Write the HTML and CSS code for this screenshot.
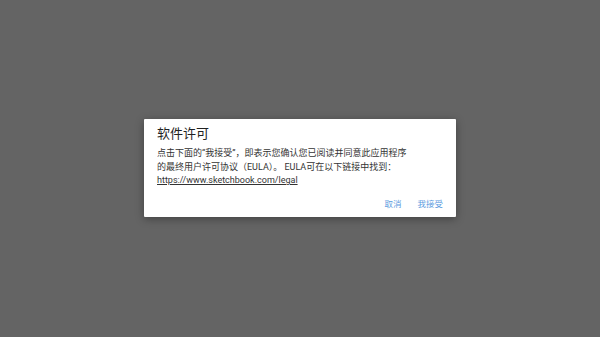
FILE: index.html
```html
<!DOCTYPE html>
<html>
<head>
<meta charset="UTF-8">
<title>软件许可</title>
<link rel="stylesheet" href="styles.css">
</head>
<body>
	<div class="dialog">
		<div class="title">软件许可</div>
		<div class="message">
			点击下面的“我接受”，即表示您确认您已阅读并同意此应用程序<br/>
			的最终用户许可协议（EULA）。 EULA可在以下链接中找到：<br/>
			<a href="#">https://www.sketchbook.com/legal</a>
		</div>
		<div class="actions">
			<span class="btn">取消</span>
			<span class="btn">我接受</span>
		</div>
	</div>
</body>
</html>
```

FILE: styles.css
```css
html, body{
	margin: 0;
	height: 100%;
}
body{
	background: #646464;
	display: flex;
	align-items: center;
	justify-content: center;
	font-family: Roboto, "Noto Sans CJK SC", sans-serif;
}
.dialog{
	width: 312px;
	height: 98px;
	box-sizing: border-box;
	background: #fff;
	border-radius: 1px;
	box-shadow: 0 2px 8px rgba(0,0,0,.35);
	padding: 6px 13px 0;
	margin-bottom: 1px;
}
.title{
	font-size: 13px;
	line-height: 18px;
	color: #212121;
	margin-bottom: 4px;
}
.message{
	font-size: 9px;
	line-height: 13.5px;
	color: #333;
	white-space: nowrap;
}
.message a{
	color: #333;
	text-decoration: underline;
}
.actions{
	display: flex;
	justify-content: flex-end;
	gap: 16px;
	margin-top: 9px;
}
.btn{
	font-size: 8.5px;
	color: #5c9be0;
}
```
